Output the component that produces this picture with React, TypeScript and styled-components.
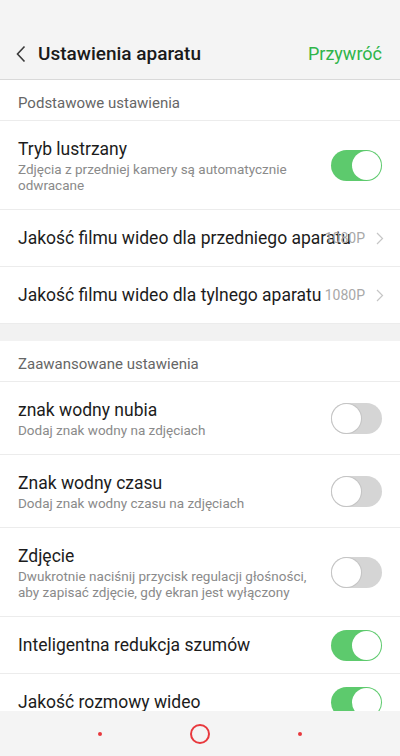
import React from "react";
import styled, { createGlobalStyle } from "styled-components";

const GlobalStyle = createGlobalStyle`
  html, body {
    margin: 0;
    padding: 0;
    background: #ffffff;
  }
  body {
    font-family: Roboto, "Noto Sans", "Liberation Sans", sans-serif;
    -webkit-font-smoothing: antialiased;
  }
  * {
    box-sizing: border-box;
  }
`;

const Screen = styled.div`
  width: 400px;
  height: 756px;
  display: flex;
  flex-direction: column;
  overflow: hidden;
  background: #ffffff;
`;

const Header = styled.header`
  flex: 0 0 auto;
  height: 80px;
  padding-top: 28px;
  background: #f4f4f4;
  border-bottom: 1px solid #d9d9d9;
`;

const HeaderBar = styled.div`
  height: 51px;
  display: flex;
  align-items: center;
  padding: 0 18px 0 16px;
`;

const BackButton = styled.button`
  border: 0;
  background: none;
  padding: 0;
  width: 22px;
  height: 24px;
  display: flex;
  align-items: center;
  color: #333333;
`;

const Title = styled.h1`
  margin: 0;
  font-size: 19px;
  font-weight: 500;
  color: #1a1a1a;
  flex: 1;
`;

const ResetLink = styled.span`
  font-size: 18px;
  color: #2fb549;
`;

const Content = styled.main`
  flex: 1;
  overflow: hidden;
`;

const SectionTitle = styled.div`
  padding: 14px 18px 8px;
  font-size: 15px;
  line-height: 18px;
  color: #666666;
  border-bottom: 1px solid #ececec;
`;

const Gap = styled.div`
  height: 17px;
  background: #f2f2f2;
`;

const Row = styled.div`
  display: flex;
  align-items: center;
  padding: 0 18px;
  border-bottom: 1px solid #ececec;
`;

const RowText = styled.div`
  flex: 1;
  min-width: 0;
  padding: 17px 24px 17px 0;
`;

const RowTitle = styled.div<{ $nowrap?: boolean }>`
  font-size: 17.5px;
  line-height: 22px;
  color: #1c1c1c;
  white-space: ${(p) => (p.$nowrap ? "nowrap" : "normal")};
`;

const RowSub = styled.div`
  margin: 1px 0 -1px;
  font-size: 13.5px;
  line-height: 16px;
  color: #8a8a8a;
`;

const LinkText = styled.div`
  flex: 1;
  min-width: 0;
  padding: 17px 0;
  overflow: visible;
`;

const Value = styled.span`
  font-size: 14px;
  color: #a8a8a8;
  margin-right: 11px;
`;

const Chevron = styled.svg`
  flex: 0 0 auto;
  display: block;
  margin-right: -2px;
`;

const Track = styled.div<{ $on: boolean }>`
  flex: 0 0 auto;
  width: 51px;
  height: 31px;
  border-radius: 16px;
  padding: 1px;
  display: flex;
  justify-content: ${(p) => (p.$on ? "flex-end" : "flex-start")};
  background: ${(p) => (p.$on ? "#5dca6d" : "#d5d5d5")};
`;

const Knob = styled.div<{ $on: boolean }>`
  width: 29px;
  height: 29px;
  border-radius: 50%;
  background: #ffffff;
  box-shadow: ${(p) => (p.$on ? "none" : "0 0 0 1px #c4c4c4")};
`;

const NavBar = styled.nav`
  flex: 0 0 auto;
  height: 45px;
  background: #f4f4f4;
  display: grid;
  grid-template-columns: repeat(3, 1fr);
  align-items: center;
  justify-items: center;
  padding: 0 50px;
`;

const Dot = styled.span`
  width: 4px;
  height: 4px;
  border-radius: 50%;
  background: #e8383d;
`;

const HomeRing = styled.span`
  width: 20px;
  height: 20px;
  border-radius: 50%;
  border: 2px solid #e8383d;
`;

const Toggle = ({ on }: { on: boolean }) => (
  <Track $on={on}>
    <Knob $on={on} />
  </Track>
);

const ToggleRow = ({
  title,
  sub,
  on,
}: {
  title: string;
  sub?: string;
  on: boolean;
}) => (
  <Row>
    <RowText>
      <RowTitle>{title}</RowTitle>
      {sub && <RowSub>{sub}</RowSub>}
    </RowText>
    <Toggle on={on} />
  </Row>
);

const LinkRow = ({ title, value }: { title: string; value: string }) => (
  <Row>
    <LinkText>
      <RowTitle $nowrap>{title}</RowTitle>
    </LinkText>
    <Value>{value}</Value>
    <Chevron width="8" height="13" viewBox="0 0 8 13">
      <path d="M1 1 L6.5 6.5 L1 12" fill="none" stroke="#c6c6c6" strokeWidth="1.2" />
    </Chevron>
  </Row>
);

export default function App() {
  return (
    <>
      <GlobalStyle />
      <Screen>
        <Header>
          <HeaderBar>
            <BackButton aria-label="back">
              <svg width="10" height="18" viewBox="0 0 10 18">
                <path d="M8.5 1.5 L1.5 9 L8.5 16.5" fill="none" stroke="#3a3a3a" strokeWidth="1.6" />
              </svg>
            </BackButton>
            <Title>Ustawienia aparatu</Title>
            <ResetLink>Przywróć</ResetLink>
          </HeaderBar>
        </Header>
        <Content>
          <SectionTitle>Podstawowe ustawienia</SectionTitle>
          <ToggleRow
            title="Tryb lustrzany"
            sub="Zdjęcia z przedniej kamery są automatycznie odwracane"
            on
          />
          <LinkRow title="Jakość filmu wideo dla przedniego aparatu" value="1080P" />
          <LinkRow title="Jakość filmu wideo dla tylnego aparatu" value="1080P" />
          <Gap />
          <SectionTitle>Zaawansowane ustawienia</SectionTitle>
          <ToggleRow title="znak wodny nubia" sub="Dodaj znak wodny na zdjęciach" on={false} />
          <ToggleRow title="Znak wodny czasu" sub="Dodaj znak wodny czasu na zdjęciach" on={false} />
          <ToggleRow
            title="Zdjęcie"
            sub="Dwukrotnie naciśnij przycisk regulacji głośności, aby zapisać zdjęcie, gdy ekran jest wyłączony"
            on={false}
          />
          <ToggleRow title="Inteligentna redukcja szumów" on />
          <ToggleRow title="Jakość rozmowy wideo" on />
        </Content>
        <NavBar>
          <Dot />
          <HomeRing />
          <Dot />
        </NavBar>
      </Screen>
    </>
  );
}
